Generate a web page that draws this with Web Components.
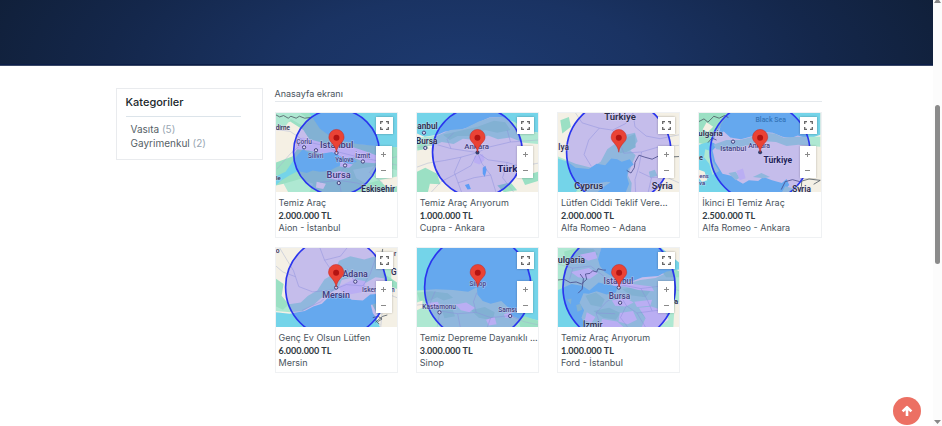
<!DOCTYPE html>
<html lang="tr">
<head>
<meta charset="utf-8">
<meta name="viewport" content="width=device-width, initial-scale=1">
<title>Anasayfa</title>
<style>
  html, body { margin: 0; }
  body { font-family: Inter, "Open Sans", sans-serif; color: #4a545d; background: #fff; overflow: hidden; }
</style>
</head>
<body>
<listing-page></listing-page>

<script>
const define = (name, html, setup) => {
  const template = document.createElement('template');
  template.innerHTML = html;
  customElements.define(name, class extends HTMLElement {
    constructor() {
      super();
      this.attachShadow({ mode: 'open' }).append(template.content.cloneNode(true));
    }
    connectedCallback() { if (setup) setup(this, this.shadowRoot); }
  });
};

/* Map scenes: each has its view box, the search circle, the ground below it and the labels above it. */
const town = (x, y) => `<circle class="town" cx="${x}" cy="${y}" r="5"/>`;
const t = (x, y, s, text, cls = '') => `<text x="${x}" y="${y}" font-size="${s}" class="${cls}">${text}</text>`;
const scenes = {
  istanbul: {
    box: '17 18 367 240', r: [200, 137, 130],
    ground: `
      <path class="green" d="M17 18H135L158 62 215 100 270 112 384 122V258H17Z"/>
      <path class="land" d="M17 60L60 44 100 70 118 98 92 112 66 150 17 168Z M17 92L50 80 70 96 40 140 17 146Z"/>
      <path class="mint" d="M17 18H90L120 40 100 58 62 36 40 66 17 58Z"/>
      <path class="water" d="M118 18H384V122L320 118 262 112 216 102 180 88 150 66Z"/>
      <path class="urban" d="M74 100L98 92 150 106 200 124 240 118 298 138 330 150 318 170 286 168 250 152 228 166 206 158 190 140 150 140 116 132 80 128Z"/>
      <path class="water" d="M17 210L46 196 72 158 98 128 130 146 186 136 200 142 222 156 244 152 262 166 240 174 214 176 196 184 178 194 150 196 128 192 110 200 84 194 60 206 34 222 17 236Z"/>
      <path class="urban" d="M172 204L210 194 244 202 236 216 204 222 176 216Z M212 166L250 174 238 184 210 180Z"/>
      <path class="mint" d="M250 190L330 176 384 192V236L330 222 290 232 260 216Z M40 232L90 218 130 232 118 258H48Z"/>
      <path class="land" d="M330 222L384 210V240L352 244Z M17 238L40 232 54 258H17Z M140 226L168 232 160 248 138 244Z"/>
      <path class="road" d="M17 68L60 74 104 104 160 116 205 136 260 150 320 162 384 176 M260 152L226 178 206 210 214 258 M206 222L262 230 320 250 M100 108L60 142 20 188 M150 228L206 222 M384 150L330 164 300 198 340 230"/>
      <path class="border" d="M17 24L28 30 40 26 54 34 62 28 78 34 88 28 104 34 120 32"/>`,
    labels: t(16, 70, 19, 'dirne', 'dark') + t(78, 111, 20, 'Çorlu') + t(150, 125, 28, 'Istanbul', 'b') + t(114, 155, 19, 'Silivri')
      + t(196, 166, 19, 'Yalova') + t(257, 155, 20, 'İzmit') + t(170, 216, 28, 'Bursa', 'b') + t(275, 258, 25, 'Eskişehir', 'dark b') + t(17, 222, 18, 'le', 'dark')
      + town(102, 122) + town(138, 131) + town(200, 139) + town(280, 165) + town(226, 177) + town(207, 230)
  },
  ankara: {
    box: '17 18 367 240', r: [200, 137, 136],
    ground: `
      <path class="water" d="M17 18H384V78L340 68 310 46 270 30 236 32 204 46 170 62 140 72 102 74 80 84 40 90 17 80Z"/>
      <path class="mint" d="M17 94L80 86 118 70 160 66 204 44 240 32 276 30 316 48 340 70 384 78V112L340 108 300 92 262 98 232 86 196 100 156 96 128 112 92 106 64 118 17 114Z"/>
      <path class="green" d="M96 84L148 72 200 60 250 42 284 46 300 70 260 78 222 70 184 88 140 88 116 100Z M17 104L44 108 52 126 18 132Z M17 196L42 184 78 202 88 234 56 232 50 258H17Z M318 180L350 206 384 196V224L344 236Z M260 238L300 228 320 252 280 258Z"/>
      <path class="urban" d="M190 150L216 142 222 160 206 174 190 168Z"/>
      <path class="lake" d="M216 184L224 178 228 190 222 212 216 202Z M162 236L174 232 180 248 170 250Z"/>
      <path class="road" d="M17 124L70 112 120 126 160 132 200 138 232 122 300 106 384 100 M200 138L180 178 140 200 90 226 60 258 M200 138L214 172 240 206 256 258 M200 138L232 160 290 168 330 180 384 170 M200 138L150 152 100 162 50 170 17 182 M150 152L130 198 152 258 M290 168L276 214 310 258 M240 206L190 214 140 230 M120 126L108 98 128 78 M300 106L290 70"/>`,
    labels: t(18, 67, 25, 'anbul', 'dark b') + t(14, 112, 25, 'Bursa', 'dark b') + t(160, 126, 24, 'Ankara') + t(260, 198, 30, 'Türkiye', 'dark bb')
      + town(38, 78) + town(42, 124) + '<circle cx="200" cy="138" r="6" fill="#34406e"/>'
  },
  adana: {
    box: '17 18 367 240', r: [201, 137, 158],
    ground: `
      <path class="mint" d="M17 150L70 172 118 184 146 166 166 128 194 108 222 84 250 78 258 104 236 132 252 146 228 206 240 230 238 258H17Z"/>
      <path class="green" d="M24 40L50 30 56 60 30 80Z M230 90L250 82 252 122 224 136 204 140 212 110Z"/>
      <path class="water" d="M17 156L46 166 70 184 110 188 134 172 160 176 178 156 196 158 210 166 234 158 246 174 230 186 226 212 232 232 222 258H136L158 240 176 228 164 226 130 232 88 238 70 258H17Z"/>
      <path class="mint" d="M70 240L96 232 132 234 174 226 152 244 130 256H80Z M292 196L310 190 318 208 296 214Z"/>
      <path class="road" d="M70 18L90 48 142 64 182 70 202 100 216 140 M142 64L110 100 96 144 118 180 M216 140L270 136 318 122 384 116 M244 18L250 60 284 88 326 96 384 84 M270 136L262 180 250 220 252 258 M182 70L222 50 244 18 M262 196L300 214 340 210 384 230 M300 214L290 258"/>
      <path class="border" d="M225 192L238 200 248 184 250 168 262 146 280 152 302 158 322 148 346 152 384 150"/>`,
    labels: t(157, 40, 29, 'Türkiye', 'dark b') + t(18, 130, 25, 'lya', 'dark') + t(66, 247, 28, 'Cyprus', 'dark b') + t(301, 248, 28, 'Syria', 'dark b')
  },
  turkiye: {
    box: '17 18 367 240', r: [202, 137, 151],
    ground: `
      <path class="green" d="M17 18H106L90 50 72 76 58 104 42 114 17 110Z"/>
      <path class="water" d="M108 18H384V84L350 96 316 86 296 94 270 90 240 78 212 76 180 88 144 98 112 92 92 74 76 80 84 52Z"/>
      <path class="water" d="M17 114L52 104 72 116 58 132 66 166 88 202 114 208 132 222 150 232 168 222 196 224 212 212 238 222 268 230 282 218 290 236 270 258H17Z"/>
      <path class="mint" d="M60 114L100 100 140 100 180 90 214 78 246 80 272 92 316 90 384 90V120L318 114 282 118 250 106 216 104 184 112 146 120 100 132 70 128Z M106 200L128 196 140 214 128 222Z M180 212L206 200 232 212 212 216Z"/>
      <path class="mint" d="M36 128L54 134 60 166 78 194 58 206 48 172 32 152Z"/>
      <path class="urban" d="M130 194L150 186 158 216 140 222Z"/>
      <path class="land" d="M17 190L34 196 42 222 26 226 17 216Z M40 46L60 60 44 76 28 68Z"/>
      <path class="mint" d="M278 240L300 246 310 258H268Z M304 240L320 236 314 248Z"/>
      <path class="border" d="M17 44L32 36 44 46 62 28 78 34 94 26 106 32 M44 108L56 94 70 100 M266 250L278 226 300 220 322 226 350 218 384 222 M328 224L326 258 M364 234L384 222"/>`,
    labels: t(188, 46, 21, 'Black Sea', 'sea') + t(15, 87, 24, 'ulgaria', 'dark b') + t(81, 132, 22, 'Istanbul') + t(166, 125, 21, 'Ankara') + t(212, 171, 26, 'Türkiye', 'dark bb')
      + t(18, 216, 18, 'ens') + t(17, 237, 18, 'va') + t(17, 159, 22, 'e', 'dark b') + t(299, 258, 25, 'Syria', 'dark b')
      + town(120, 105) + '<circle cx="202" cy="137" r="6" fill="#34406e"/>'
  },
  mersin: {
    box: '17 15 367 240', r: [199, 134, 153],
    ground: `
      <path class="mint" d="M208 54L242 40 284 50 334 36 366 48V110L318 104 282 124 250 104 216 112 206 138 182 150 152 168 132 186 98 206 60 210 17 206V178L52 186 92 180 114 160 142 144 164 110 188 96Z"/>
      <path class="green" d="M17 108L40 124 34 160 56 186 38 202 17 192Z M340 90L384 120V140L348 124Z M300 166L330 160 346 200 326 220 310 190Z"/>
      <path class="urban" d="M206 132L254 110 288 116 284 148 238 156 214 146Z"/>
      <path class="water" d="M17 210L58 214 104 206 130 192 156 184 188 152 222 154 246 172 280 174 302 156 332 154 326 180 304 188 310 212 320 226 332 255H17Z"/>
      <path class="road" d="M17 70L38 88 76 102 86 132 128 148 190 142 230 126 280 130 330 144 384 166 M28 15L48 48 70 84 76 102 M150 15L164 52 184 82 204 128 M164 52L212 40 232 15 M232 78L252 112 M280 130L302 94 318 48 342 26 M330 144L340 190 334 255 M190 142L152 178 96 204"/>
      <path class="border" d="M310 226L326 222 338 230 326 238 M318 240L340 222 354 218 M318 234L330 246 M340 18L336 40"/>`,
    labels: t(218, 103, 27, 'Adana', 'b') + t(157, 167, 27, 'Mersin', 'b') + t(277, 148, 20, 'Iskenderun') + t(365, 97, 25, 'G', 'dark') + t(16, 29, 20, 'o', 'dark') + t(374, 40, 20, 'r', 'dark')
      + town(257, 117) + town(199, 135)
  },
  sinop: {
    box: '17 15 367 240', r: [201, 134, 161],
    ground: `
      <path class="water" d="M17 15H384V255H17Z"/>
      <path class="mint" d="M17 144L74 140 126 142 172 148 198 134 200 156 216 176 240 184 272 176 292 194 322 208 348 226 384 234V255H17Z"/>
      <path class="green" d="M17 150L60 146 110 152 126 166 98 174 78 164 48 178 24 174Z M180 204L222 194 252 210 246 234 204 226Z M318 212L350 224 384 236V255H330Z M90 196L124 200 132 222 100 228Z"/>
      <path class="urban" d="M134 186L166 180 192 196 176 210 150 204Z M226 232L252 224 258 246 234 250Z M52 182L80 178 88 194 60 198Z M280 216L306 208 308 226 284 226Z"/>
      <path class="water" d="M300 212L326 210 344 222 330 230 308 222Z"/>
      <path class="land" d="M17 180L34 174 32 196 17 204Z"/>
      <path class="road" d="M17 188L48 184 86 206 140 214 196 210 240 226 300 220 340 238 384 248 M198 150L188 178 196 210 M86 206L78 255 M140 214L148 255 M240 226L230 255 M72 146L56 184"/>`,
    labels: t(176, 129, 20, 'Sinop') + t(33, 199, 20, 'Kastamonu') + t(263, 209, 20, 'Samsun') + town(85, 210) + town(299, 221)
  },
  marmara: {
    box: '17 15 367 240', r: [202, 134, 170],
    ground: `
      <path class="mint" d="M17 15H148L140 54 154 82 188 104 222 124 266 112 312 106 346 90 384 98V255H17Z"/>
      <path class="green" d="M36 26L74 16 124 18 138 34 114 48 78 40 58 58 38 54Z M100 160L132 150 158 170 148 194 116 188Z M124 206L172 196 206 212 192 232 154 226Z M212 140L254 130 296 146 282 164 236 158Z M266 208L306 196 322 226 292 242Z M330 84L362 74 384 86V104H344Z"/>
      <path class="urban" d="M82 36L130 26 136 46 108 54Z M56 88L110 76 138 92 114 108 78 104Z M164 106L202 116 242 124 300 132 308 146 260 142 220 132 184 130Z M180 174L220 166 246 180 222 192 190 190Z M248 178L302 172 296 190 256 194Z M204 212L244 206 256 232 228 246 200 238Z M104 210L130 224 118 242 98 234Z M262 196L300 192 340 206 352 232 320 255H270L282 228Z M150 230L196 238 216 255H146Z"/>
      <path class="water" d="M148 15H330L384 60V80L346 86 320 100 272 104 242 116 212 118 184 104 158 88 144 70 138 50Z M17 142L58 124 92 130 112 144 140 120 164 126 198 132 192 150 164 156 134 146 110 154 94 152 82 182 96 204 88 226 104 255H17Z"/>
      <path class="green" d="M72 188L86 184 90 202 76 208Z M44 172L58 168 56 186Z"/>
      <path class="land" d="M370 184L384 178V255H366Z"/>
      <path class="road" d="M17 64L62 76 116 70 160 104 204 126 268 138 330 130 384 144 M204 156L224 190 256 212 302 206 366 198 M204 156L166 176 132 212 148 255 M224 190L206 226 228 255 M256 212L282 255 M132 212L190 214 M62 76L52 110 M268 138L288 174 302 206"/>
      <path class="border" d="M17 112L36 110 54 120 72 118 88 124 104 110 100 94 114 92 122 84 134 88 138 78 154 82 162 82 M84 94L94 108 90 140 78 152"/>`,
    labels: t(16, 62, 27, 'ulgaria', 'dark b') + t(155, 123, 25, 'Istanbul') + t(171, 170, 25, 'Bursa') + t(93, 258, 26, 'İzmir', 'dark') + t(369, 184, 22, 'a', 'dark b')
      + town(201, 135) + town(205, 181)
  }
};

define('area-map', `
  <style>
    :host { display: block; position: relative; aspect-ratio: 121 / 79; overflow: hidden; background: #f4f0e5; }
    svg { display: block; }
    .scene { width: 100%; height: 100%; font-family: Roboto, sans-serif; font-weight: 500; }
    .land { fill: #f5f0e4; } .green { fill: #9be0c4; } .mint { fill: #aee8d2; }
    .urban { fill: #e6dcef; } .water { fill: #74d4e9; } .lake { fill: #69c5f3; }
    .road { fill: none; stroke: #a7b2cf; stroke-width: 2; opacity: .7; }
    .border { fill: none; stroke: #4b555f; stroke-width: 3; opacity: .8; }
    .radius { fill: #3824ff; fill-opacity: .25; stroke: #2a35ee; stroke-width: 5; }
    .town { fill: #d9d8f2; stroke: #41407b; stroke-width: 3; }
    text { fill: #443f80; paint-order: stroke; stroke: #e4e0fa; stroke-opacity: .5; stroke-width: 3; }
    .dark { fill: #2b2c4b; } .b { font-weight: 600; } .bb { font-weight: 700; fill: #221e5c; }
    .sea { fill: #3475b9; stroke: none; }
    button { display: grid; place-items: center; border: 0; padding: 0; margin: 0; background: #fff; color: #666; }
    .full { position: absolute; top: 4px; right: 4px; width: 17px; height: 17px; box-shadow: 0 0 2px #0005; }
    .zoom { position: absolute; top: 33px; right: 5px; width: 16px; box-shadow: 0 0 2px #0004; display: grid; }
    .zoom button { height: 16px; color: #8a8a8a; }
  </style>
  <div class="scene"></div>
  <button class="full" aria-label="Tam ekran"><svg width="9" height="9" viewBox="0 0 9 9" fill="none" stroke="currentColor" stroke-width="1.3"><path d="M.7 3V.7H3M6 .7H8.3V3M8.3 6V8.3H6M3 8.3H.7V6"/></svg></button>
  <div class="zoom">
    <button aria-label="Yakınlaştır"><svg width="5" height="5" viewBox="0 0 5 5" stroke="currentColor"><path d="M0 2.5H5M2.5 0V5"/></svg></button>
    <button aria-label="Uzaklaştır"><svg width="5" height="5" viewBox="0 0 5 5" stroke="currentColor"><path d="M0 2.5H5"/></svg></button>
  </div>`,
  (el, root) => {
    const s = scenes[el.getAttribute('scene')];
    const [cx, cy, r] = s.r;
    root.querySelector('.scene').innerHTML = `
      <svg width="100%" height="100%" viewBox="${s.box}" preserveAspectRatio="xMidYMid slice">
        <g>${s.ground}</g><circle class="radius" cx="${cx}" cy="${cy}" r="${r}"/>${s.labels}
        <g transform="translate(${cx} ${cy})">
          <path d="M0 0C-2-14-7-20-14-28C-20-34-23-39-23-46A23 23 0 0 1 23-46C23-39 20-34 14-28C7-20 2-14 0 0Z" fill="#ea4335" stroke="#c5221f" stroke-width="1.5"/>
          <circle cy="-44" r="9" fill="#b31412"/>
        </g>
      </svg>`;
  });

define('listing-card', `
  <style>
    :host { display: block; min-width: 0; border: 1px solid #eff1f3; }
    .info { padding: 4px 3px 3px; font-size: 9px; line-height: 13px; white-space: nowrap; }
    a { display: block; color: inherit; text-decoration: none; }
    strong { display: block; font-family: Lato, sans-serif; font-weight: 700; color: #303a42; }
    p { margin: 0; line-height: 12px; }
  </style>
  <slot name="map"></slot>
  <div class="info">
    <a href="#ilan"><slot name="title"></slot></a>
    <strong><slot name="price"></slot></strong>
    <p><slot></slot></p>
  </div>`);

define('category-box', `
  <style>
    :host { display: block; border: 1px solid #e9ebee; padding: 6px 21px 9px 9px; }
    h2 { margin: 0; padding-bottom: 7px; border-bottom: 1px solid #dce4ea; font-size: 11px; line-height: 14px; font-weight: 500; color: #20262b; }
    ul { list-style: none; margin: 0; padding: 5px 0 0 5px; font-size: 10px; line-height: 14px; }
    a { color: #565f67; text-decoration: none; }
    span { color: #9aa7b3; }
  </style>
  <h2>Kategoriler</h2>
  <ul>
    <li><a href="#vasita">Vasıta <span>(5)</span></a></li>
    <li><a href="#gayrimenkul">Gayrimenkul <span>(2)</span></a></li>
  </ul>`);

define('hero-band', `
  <style>
    :host { display: block; height: 65px; border-bottom: 1px solid #3a4866;
      background: radial-gradient(ellipse 55% 330% at 50% 110%, #1d3a70 0%, #1a3363 35%, #14274b 70%, #101f38 100%);
      box-shadow: inset 0 -1px #0b1d48; }
  </style>`);

define('scroll-rail', `
  <style>
    :host { display: flex; flex-direction: column; align-items: center; height: 100vh; width: 9px; background: #fcfcfc; }
    svg { display: block; flex: none; fill: #888; }
    .before { flex: 102; } .thumb { flex: 159; width: 5px; border-radius: 3px; background: #8b8b8b; } .after { flex: 156; }
    .down { margin-bottom: 2px; }
  </style>
  <svg width="7" height="3" viewBox="0 0 7 3"><path d="M2 0H5L7 3H0Z"/></svg>
  <div class="before"></div><div class="thumb"></div><div class="after"></div>
  <svg class="down" width="7" height="4" viewBox="0 0 7 4"><path d="M0 0H7L3.5 4Z"/></svg>`);

define('top-button', `
  <style>
    :host { position: fixed; right: 21px; bottom: 1px; }
    a { display: grid; place-items: center; width: 28px; height: 28px; border-radius: 50%; background: #ec7063; }
    svg { display: block; }
  </style>
  <a href="#top" aria-label="Yukarı çık"><svg width="12" height="12" viewBox="0 0 12 12" fill="none" stroke="#fff" stroke-width="2.6" stroke-linejoin="round"><path d="M1.6 6.4L6 2.2 10.4 6.4M6 3V11"/></svg></a>`);

define('listing-page', `
  <style>
    :host { display: grid; grid-template-columns: 1fr auto; }
    .page { min-width: 0; }
    .wrap { box-sizing: border-box; max-width: 710px; margin: 0 auto; padding: 22px 0 40px 4px; display: grid; grid-template-columns: 147px minmax(0, 1fr); gap: 12px; align-items: start; }
    h1 { margin: 0 0 10px; padding-bottom: 2px; border-bottom: 1px solid #e4e8ec; font-size: 9px; line-height: 11px; font-weight: 400; }
    .grid { display: grid; grid-template-columns: repeat(4, minmax(0, 1fr)); gap: 9px 18px; }
  </style>
  <div class="page">
    <hero-band></hero-band>
    <div class="wrap">
      <category-box></category-box>
      <main>
        <h1>Anasayfa ekranı</h1>
        <div class="grid"></div>
      </main>
    </div>
  </div>
  <scroll-rail></scroll-rail>
  <top-button></top-button>`,
  (el, root) => {
    root.querySelector('.grid').innerHTML = [
      ['istanbul', 'Temiz Araç', '2.000.000 TL', 'Aion - İstanbul'],
      ['ankara', 'Temiz Araç Arıyorum', '1.000.000 TL', 'Cupra - Ankara'],
      ['adana', 'Lütfen Ciddi Teklif Vere...', '2.000.000 TL', 'Alfa Romeo - Adana'],
      ['turkiye', 'İkinci El Temiz Araç', '2.500.000 TL', 'Alfa Romeo - Ankara'],
      ['mersin', 'Genç Ev Olsun Lütfen', '6.000.000 TL', 'Mersin'],
      ['sinop', 'Temiz Depreme Dayanıklı ...', '3.000.000 TL', 'Sinop'],
      ['marmara', 'Temiz Araç Arıyorum', '1.000.000 TL', 'Ford - İstanbul']
    ].map(([scene, title, price, place]) => `
      <listing-card><area-map slot="map" scene="${scene}"></area-map><span slot="title">${title}</span><span slot="price">${price}</span>${place}</listing-card>`).join('');
  });
</script>
</body>
</html>
